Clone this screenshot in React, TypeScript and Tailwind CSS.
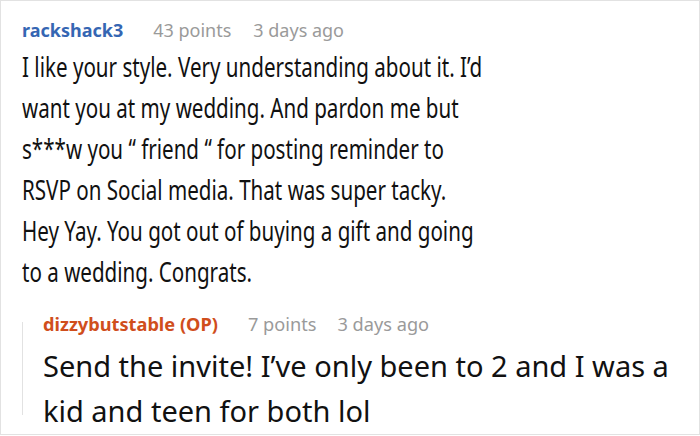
import React from 'react';

const font = { fontFamily: '"Noto Sans", "Open Sans", sans-serif' };

const bodyLines = [
  'I like your style. Very understanding about it. I’d',
  'want you at my wedding. And pardon me but',
  's***w you “ friend “ for posting reminder to',
  'RSVP on Social media. That was super tacky.',
  'Hey Yay. You got out of buying a gift and going',
  'to a wedding. Congrats.',
];

const replyLines = ['Send the invite! I’ve only been to 2 and I was a', 'kid and teen for both lol'];

const App: React.FC = () => {
  return (
    <div className="w-[700px] h-[436px] bg-white overflow-hidden" style={font}>
      <div className="h-[435px] border border-[#e2e2e2] pl-[21px] pr-4 pt-[15px]">
        {/* Parent comment */}
        <div className="flex items-baseline text-[18px] leading-[28px]">
          <span className="font-bold text-[#3566b3]">rackshack3</span>
          <span className="ml-[30px] text-[#9a9a9a]">43 points</span>
          <span className="ml-[22px] text-[#9a9a9a]">3 days ago</span>
        </div>
        {/* body text is horizontally squeezed in the source */}
        <div className="mt-[2px] text-[28px] leading-[41px] text-[#111] whitespace-nowrap origin-left scale-x-[0.735]">
          {bodyLines.map((l, i) => (
            <div key={i}>{l}</div>
          ))}
        </div>

        {/* Reply */}
        <div className="mt-[20px] flex">
          <div className="w-px bg-[#e2e2e2] mt-[10px] mb-[18px] shrink-0" />
          <div className="pl-[20px]">
            <div className="flex items-baseline text-[18.2px] leading-[24px]">
              <span className="font-bold text-[#d04e1c]">dizzybutstable (OP)</span>
              <span className="ml-[30px] text-[#9a9a9a]">7 points</span>
              <span className="ml-[21px] text-[#9a9a9a]">3 days ago</span>
            </div>
            <div className="mt-[7px] text-[29px] leading-[45px] text-[#111] whitespace-nowrap">
              {replyLines.map((l, i) => (
                <div key={i}>{l}</div>
              ))}
            </div>
          </div>
        </div>
      </div>
    </div>
  );
};

export default App;
